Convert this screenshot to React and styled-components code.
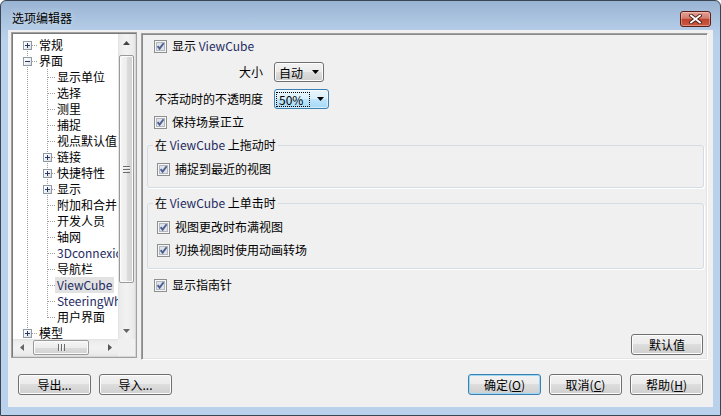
import React from "react";
import styled, { createGlobalStyle, css } from "styled-components";

const GlobalStyle = createGlobalStyle`
  html, body {
    margin: 0;
    padding: 0;
    background: #fff;
  }
  body {
    font-family: "Noto Sans CJK SC", "Noto Sans", sans-serif;
    font-size: 12px;
    line-height: 16px;
    color: #000;
  }
  *, *::before, *::after {
    box-sizing: border-box;
  }
`;

const dotV = "repeating-linear-gradient(to bottom, #a0a0a0 0 1px, transparent 1px 2px)";
const dotH = "repeating-linear-gradient(to right, #a0a0a0 0 1px, transparent 1px 2px)";

const treeItems = [
  { text: "常规", cells: [{ v: "down", h: true, box: "+" }] },
  { text: "界面", cells: [{ v: "full", h: true, box: "-" }] },
  { text: "显示单位", child: true },
  { text: "选择", child: true },
  { text: "测里", child: true },
  { text: "捕捉", child: true },
  { text: "视点默认值", child: true },
  { text: "链接", child: true, box: "+" },
  { text: "快捷特性", child: true, box: "+" },
  { text: "显示", child: true, box: "+" },
  { text: "附加和合并", child: true },
  { text: "开发人员", child: true },
  { text: "轴网", child: true },
  { text: "3Dconnexion", child: true, latin: true },
  { text: "导航栏", child: true },
  { text: "ViewCube", child: true, latin: true, selected: true },
  { text: "SteeringWheels", child: true, latin: true },
  { text: "用户界面", child: true, last: true },
  { text: "模型", cells: [{ v: "full", h: true, box: "+" }] },
];

const cellsFor = (item) =>
  item.child
    ? [{ v: "full" }, { v: item.last ? "top" : "full", h: true, box: item.box }]
    : item.cells;

const CloseGlyph = () => (
  <svg width="13" height="10" viewBox="0 0 13 10">
    <path d="M2 1.5 L11 8.5 M11 1.5 L2 8.5" stroke="#4a1c16" strokeWidth="3.6" strokeLinecap="square" />
    <path d="M2 1.5 L11 8.5 M11 1.5 L2 8.5" stroke="#fff" strokeWidth="1.8" strokeLinecap="square" />
  </svg>
);

const Arrow = ({ dir, color = "#444" }) => {
  const d = {
    up: "M0 4 L3.5 0 L7 4 Z",
    down: "M0 0 L7 0 L3.5 4 Z",
    left: "M4 0 L4 7 L0 3.5 Z",
    right: "M0 0 L0 7 L4 3.5 Z",
  }[dir];
  const vertical = dir === "up" || dir === "down";
  return (
    <svg width={vertical ? 7 : 4} height={vertical ? 4 : 7} viewBox={vertical ? "0 0 7 4" : "0 0 4 7"}>
      <path d={d} fill={color} />
    </svg>
  );
};

const CheckBox = () => (
  <CheckFrame>
    <svg width="13" height="13" viewBox="0 0 13 13">
      <rect x="0.5" y="0.5" width="12" height="12" fill="#f6f6f6" stroke="#8e8f8f" />
      <rect x="2.5" y="2.5" width="8" height="8" fill="#dfe2e7" stroke="#b3b8c0" />
      <path d="M3.6 6.2 L5.6 8.6 L9.6 3.2" fill="none" stroke="#4b5f93" strokeWidth="1.9" />
    </svg>
  </CheckFrame>
);

const SignBox = ({ sign }) => (
  <Expander>
    <svg width="7" height="7" viewBox="0 0 7 7">
      <rect x="1" y="3" width="5" height="1" fill="#1f3a6b" />
      {sign === "+" && <rect x="3" y="1" width="1" height="5" fill="#1f3a6b" />}
    </svg>
  </Expander>
);

const App = () => {
  return (
    <>
      <GlobalStyle />
      <Window>
        <TitleBar>
          <Title>选项编辑器</Title>
          <CloseButton>
            <CloseGlyph />
          </CloseButton>
        </TitleBar>

        <Client>
          <Main>
            <TreeBox>
              <TreeView>
                {treeItems.map((item) => (
                  <TreeRow key={item.text}>
                    {cellsFor(item).map((c, i) => (
                      <Guide key={i} $w={i === 0 ? 20 : 18} $v={c.v} $h={c.h}>
                        {c.box && <SignBox sign={c.box} />}
                      </Guide>
                    ))}
                    <NodeLabel $selected={item.selected} $latin={item.latin}>
                      {item.text}
                    </NodeLabel>
                  </TreeRow>
                ))}
              </TreeView>
              <VScroll>
                <ScrollBtn><Arrow dir="up" /></ScrollBtn>
                <VTrack>
                  <VThumb>
                    <GripH />
                  </VThumb>
                </VTrack>
                <ScrollBtn><Arrow dir="down" color="#666" /></ScrollBtn>
              </VScroll>
              <HScroll>
                <ScrollBtn><Arrow dir="left" color="#666" /></ScrollBtn>
                <HTrack>
                  <HThumb>
                    <GripV />
                  </HThumb>
                </HTrack>
                <ScrollBtn><Arrow dir="right" color="#555" /></ScrollBtn>
              </HScroll>
              <Corner />
            </TreeBox>

            <Panel>
              <CheckRow>
                <CheckBox />
                <span>
                  显示 <Latin>ViewCube</Latin>
                </span>
              </CheckRow>

              <SelectRow $top={8}>
                <FieldLabel>大小</FieldLabel>
                <Select $w={50}>
                  <SelectValue>自动</SelectValue>
                  <Arrow dir="down" color="#000" />
                </Select>
              </SelectRow>

              <SelectRow $top={7}>
                <FieldLabel>不活动时的不透明度</FieldLabel>
                <Select $w={55} $focused>
                  <SelectValue $focused>50%</SelectValue>
                  <Arrow dir="down" color="#000" />
                </Select>
              </SelectRow>

              <CheckRow $top={5}>
                <CheckBox />
                <span>保持场景正立</span>
              </CheckRow>

              <Group $top={7}>
                <GroupTitle>
                  在 <Latin>ViewCube</Latin> 上拖动时
                </GroupTitle>
                <CheckRow $indent={0}>
                  <CheckBox />
                  <span>捕捉到最近的视图</span>
                </CheckRow>
              </Group>

              <Group $top={7}>
                <GroupTitle>
                  在 <Latin>ViewCube</Latin> 上单击时
                </GroupTitle>
                <CheckRow $indent={0}>
                  <CheckBox />
                  <span>视图更改时布满视图</span>
                </CheckRow>
                <CheckRow $indent={0} $top={7}>
                  <CheckBox />
                  <span>切换视图时使用动画转场</span>
                </CheckRow>
              </Group>

              <CheckRow $top={8}>
                <CheckBox />
                <span>显示指南针</span>
              </CheckRow>

              <DefaultsButton $w={72}>默认值</DefaultsButton>
            </Panel>
          </Main>

          <Footer>
            <ButtonGroup>
              <Button>导出...</Button>
              <Button>导入...</Button>
            </ButtonGroup>
            <ButtonGroup>
              <Button $default>
                确定(<u>O</u>)
              </Button>
              <Button>
                取消(<u>C</u>)
              </Button>
              <Button>
                帮助(<u>H</u>)
              </Button>
            </ButtonGroup>
          </Footer>
        </Client>
      </Window>
    </>
  );
};

const Window = styled.div`
  width: 721px;
  height: 416px;
  border: 1px solid #3a4654;
  border-radius: 6px 6px 0 0;
  background: linear-gradient(to bottom, #99b4d3 0px, #b4cce7 29px, #b9d1ea 40px, #b9d1ea 100%);
  display: flex;
  flex-direction: column;
  overflow: hidden;
`;

const TitleBar = styled.div`
  flex: none;
  height: 29px;
  display: flex;
  align-items: flex-start;
  justify-content: space-between;
  padding: 9px 9px 0 11px;
`;

const Title = styled.div`
  font-size: 12px;
  line-height: 16px;
  color: #000;
  text-shadow: 0 0 6px rgba(255, 255, 255, 0.6);
`;

const CloseButton = styled.div`
  margin-top: 1px;
  width: 31px;
  height: 16px;
  border: 1px solid #5b1e18;
  border-radius: 3px;
  background: linear-gradient(to bottom, #e3a093 0%, #d27d6e 45%, #c0432f 52%, #c95b43 100%);
  box-shadow: inset 0 0 0 1px rgba(255, 220, 210, 0.4);
  display: flex;
  align-items: center;
  justify-content: center;
`;

const Client = styled.div`
  flex: 1;
  margin: 0 7px 8px;
  background: #f0f0f0;
  display: flex;
  flex-direction: column;
  padding: 2px 5px 0 3px;
`;

const Main = styled.div`
  display: flex;
  gap: 4px;
  height: 328px;
`;

const TreeBox = styled.div`
  flex: none;
  width: 126px;
  height: 326px;
  border: 1px solid #a0a0a0;
  padding: 1px;
  background: #fff;
  box-shadow: inset 1px 1px 0 #7a7a7a, inset -1px -1px 0 #d8d8d8;
  display: grid;
  grid-template-columns: 105px 17px;
  grid-template-rows: 305px 17px;
`;

const TreeView = styled.div`
  overflow: hidden;
  padding: 3px 0 0 4px;
  background: #fff;
`;

const TreeRow = styled.div`
  display: flex;
  align-items: center;
  height: 16px;
  white-space: nowrap;
`;

const Guide = styled.span`
  flex: none;
  width: ${(p) => p.$w}px;
  height: 16px;
  display: flex;
  align-items: center;
  background-repeat: no-repeat;
  ${(p) => {
    const imgs = [];
    const sizes = [];
    const pos = [];
    if (p.$v === "full") {
      imgs.push(dotV);
      sizes.push("1px 16px");
      pos.push("10px 0");
    }
    if (p.$v === "down") {
      imgs.push(dotV);
      sizes.push("1px 8px");
      pos.push("10px 8px");
    }
    if (p.$v === "top") {
      imgs.push(dotV);
      sizes.push("1px 9px");
      pos.push("10px 0");
    }
    if (p.$h) {
      imgs.push(dotH);
      sizes.push(`${p.$w - 11}px 1px`);
      pos.push("11px 8px");
    }
    if (!imgs.length) return css``;
    return css`
      background-image: ${imgs.join(", ")};
      background-size: ${sizes.join(", ")};
      background-position: ${pos.join(", ")};
    `;
  }}
`;

const Expander = styled.span`
  width: 9px;
  height: 9px;
  margin-left: 6px;
  margin-top: 1px;
  border: 1px solid #8f9aa8;
  background: linear-gradient(135deg, #ffffff 0%, #f2f2f2 50%, #dcdcdc 100%);
  display: flex;
`;

const NodeLabel = styled.span`
  padding: 0 2px;
  height: 16px;
  line-height: 16px;
  color: ${(p) => (p.$latin ? "#1f2c63" : "#000")};
  background: ${(p) => (p.$selected ? "#e2e2e2" : "transparent")};
`;

const ScrollBtn = styled.div`
  display: flex;
  align-items: center;
  justify-content: center;
`;

const VScroll = styled.div`
  display: grid;
  grid-template-rows: 17px 1fr 17px;
  background: linear-gradient(to right, #e2e2e2 0, #ececec 2px, #f2f2f2 50%, #ececec 15px, #e4e4e4 17px);
`;

const VTrack = styled.div`
  padding: 4px 1px 0 1px;
`;

const VThumb = styled.div`
  height: 228px;
  border: 1px solid #9a9a9a;
  border-radius: 2px;
  background: linear-gradient(to right, #f6f6f6 0%, #ececec 50%, #dcdcdc 51%, #d2d2d2 100%);
  box-shadow: inset 0 0 0 1px #fbfbfb;
  display: flex;
  align-items: center;
  justify-content: center;
`;

const GripH = styled.span`
  width: 7px;
  height: 7px;
  background: repeating-linear-gradient(to bottom, #6b6b6b 0 1px, #f4f4f4 1px 2px, transparent 2px 3px);
`;

const HScroll = styled.div`
  display: grid;
  grid-template-columns: 17px 1fr 17px;
  background: linear-gradient(to bottom, #e2e2e2 0, #ececec 2px, #f2f2f2 50%, #ececec 15px, #e4e4e4 17px);
`;

const HTrack = styled.div`
  padding: 1px 0 1px 3px;
`;

const HThumb = styled.div`
  width: 56px;
  height: 100%;
  border: 1px solid #9a9a9a;
  border-radius: 2px;
  background: linear-gradient(to bottom, #f6f6f6 0%, #ececec 50%, #dcdcdc 51%, #d2d2d2 100%);
  box-shadow: inset 0 0 0 1px #fbfbfb;
  display: flex;
  align-items: center;
  justify-content: center;
`;

const GripV = styled.span`
  width: 7px;
  height: 7px;
  background: repeating-linear-gradient(to right, #6b6b6b 0 1px, #f4f4f4 1px 2px, transparent 2px 3px);
`;

const Corner = styled.div`
  background: #f0f0f0;
`;

const Panel = styled.div`
  flex: 1;
  margin-top: 1px;
  height: 327px;
  border: 1px solid;
  border-color: #a0a0a0 #fff #fff #a0a0a0;
  box-shadow: inset 1px 1px 0 #8a8a8a, inset -1px -1px 0 #e3e3e3;
  padding: 4px 3px 4px 5px;
  display: flex;
  flex-direction: column;
`;

const Latin = styled.span`
  color: #1f2c63;
`;

const CheckRow = styled.div`
  display: flex;
  align-items: center;
  gap: 5px;
  height: 16px;
  margin-top: ${(p) => p.$top || 0}px;
  padding-left: ${(p) => (p.$indent === undefined ? 7 : p.$indent)}px;
  white-space: nowrap;
`;

const CheckFrame = styled.span`
  flex: none;
  width: 13px;
  height: 13px;
  display: flex;
`;

const SelectRow = styled.div`
  display: grid;
  grid-template-columns: 108px auto;
  column-gap: 11px;
  align-items: center;
  justify-content: start;
  padding-left: 8px;
  margin-top: ${(p) => p.$top || 0}px;
`;

const FieldLabel = styled.span`
  text-align: right;
  white-space: nowrap;
`;

const Select = styled.div`
  width: ${(p) => p.$w}px;
  height: 20px;
  border: 1px solid ${(p) => (p.$focused ? "#3c7fb1" : "#707070")};
  border-radius: 3px;
  background: ${(p) =>
    p.$focused
      ? "linear-gradient(to bottom, #eaf6fd 0%, #d9f0fc 49%, #bee6fd 50%, #a7d9f5 100%)"
      : "linear-gradient(to bottom, #f2f2f2 0%, #ebebeb 49%, #dddddd 50%, #cfcfcf 100%)"};
  box-shadow: inset 0 0 0 1px ${(p) => (p.$focused ? "rgba(255,255,255,0.5)" : "#fcfcfc")};
  display: flex;
  align-items: center;
  justify-content: space-between;
  padding: 0 4px 0 1px;
`;

const SelectValue = styled.span`
  width: 34px;
  height: 15px;
  line-height: 13px;
  padding-left: 2px;
  border: 1px dotted ${(p) => (p.$focused ? "#000" : "transparent")};
`;

const Group = styled.fieldset`
  margin: ${(p) => p.$top || 0}px 0 0 0;
  padding: 8px 9px 10px 9px;
  border: 1px solid #d3dce3;
  border-radius: 3px;
  min-width: 0;
  box-shadow: 1px 1px 0 #fff;
`;

const GroupTitle = styled.legend`
  padding: 0 2px;
  margin-left: -4px;
  line-height: 16px;
  white-space: nowrap;
`;

const Button = styled.button`
  width: ${(p) => p.$w || 73}px;
  height: 21px;
  padding: 0;
  font-family: inherit;
  font-size: 12px;
  line-height: 16px;
  color: #000;
  border: 1px solid ${(p) => (p.$default ? "#3c7fb1" : "#707070")};
  border-radius: 3px;
  background: linear-gradient(to bottom, #f2f2f2 0%, #ebebeb 49%, #dddddd 50%, #cfcfcf 100%);
  box-shadow: inset 0 0 0 1px ${(p) => (p.$default ? "#9ad8f6" : "#fcfcfc")};
  display: flex;
  align-items: center;
  justify-content: center;

  u {
    text-decoration: underline;
    text-underline-offset: 1px;
  }
`;

const DefaultsButton = styled(Button)`
  margin-top: auto;
  margin-right: 1px;
  align-self: flex-end;
`;

const Footer = styled.div`
  display: flex;
  justify-content: space-between;
  margin-top: 14px;
  padding: 0 5px 0 7px;
`;

const ButtonGroup = styled.div`
  display: flex;
  gap: 8px;
`;

export default App;
